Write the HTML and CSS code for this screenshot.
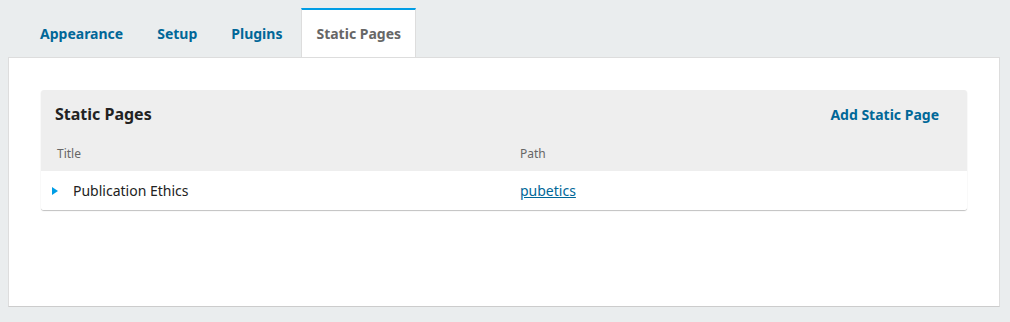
FILE: index.html
```html
<!DOCTYPE html>
<html lang="en">
<head>
    <meta charset="UTF-8">
    <title>Website Settings</title>
    <link rel="stylesheet" href="styles.css">
</head>
<body>
<div class="tabs">
    <button type="button" class="tab">Appearance</button>
    <button type="button" class="tab">Setup</button>
    <button type="button" class="tab">Plugins</button>
    <button type="button" class="tab active">Static Pages</button>
</div>
<div class="panel">
    <div class="list">
        <div class="list-header">
            <h2>Static Pages</h2>
            <button type="button" class="add">Add Static Page</button>
        </div>
        <div class="cols">
            <div class="title">Title</div>
            <div class="path">Path</div>
        </div>
        <div class="row">
            <div class="title">
                <span class="arrow"></span>
                Publication Ethics
            </div>
            <div class="path"><a href="#">pubetics</a></div>
        </div>
    </div>
</div>
</body>
</html>
```

FILE: styles.css
```css
body {
    margin: 8px 10px 0 8px;
    background: #eaedee;
    color: #222;
    font-family: "Noto Sans", sans-serif;
    font-size: 14px;
}

.tabs {
    display: flex;
    gap: 4px;
    padding-left: 17px;
}

.tab {
    height: 49px;
    padding: 0 14px;
    border: 1px solid transparent;
    border-top: 2px solid transparent;
    border-bottom: 0;
    background: none;
    font-family: inherit;
    font-size: 14px;
    font-weight: bold;
    color: #006798;
}

.tab.active {
    background: #fff;
    color: #666;
    border-color: #009de5 #ddd #ddd;
    margin-bottom: -1px;
    position: relative;
}

.panel {
    box-sizing: border-box;
    height: 250px;
    padding: 32px;
    background: #fff;
    border: 1px solid #ddd;
    border-bottom-color: #ccc;
}

.list {
    border-radius: 3px;
    box-shadow: 0 1px 1px rgba(0, 0, 0, 0.25);
    overflow: hidden;
}

.list-header {
    display: flex;
    align-items: center;
    justify-content: space-between;
    height: 48px;
    padding: 0 28px 0 14px;
    background: #eee;
}

h2 {
    margin: 0;
    font-size: 16px;
    font-weight: bold;
    color: #222;
}

.add {
    border: 0;
    padding: 0;
    background: none;
    font-family: inherit;
    font-size: 14px;
    font-weight: bold;
    color: #006798;
}

.cols {
    display: grid;
    grid-template-columns: 1fr 1fr;
    padding: 7px 0 8px;
    background: #eee;
    font-size: 12px;
    line-height: 18px;
    color: #666;
}

.cols .title,
.cols .path,
.row .path {
    padding-left: 16px;
}

.row {
    display: grid;
    grid-template-columns: 1fr 1fr;
    align-items: center;
    height: 39px;
    background: #fff;
}

.row .title {
    display: flex;
    align-items: center;
    gap: 15px;
    padding-left: 11px;
}

.arrow {
    width: 0;
    height: 0;
    border-top: 4px solid transparent;
    border-bottom: 4px solid transparent;
    border-left: 6px solid #009de5;
}

.row a {
    color: #006798;
}
```
